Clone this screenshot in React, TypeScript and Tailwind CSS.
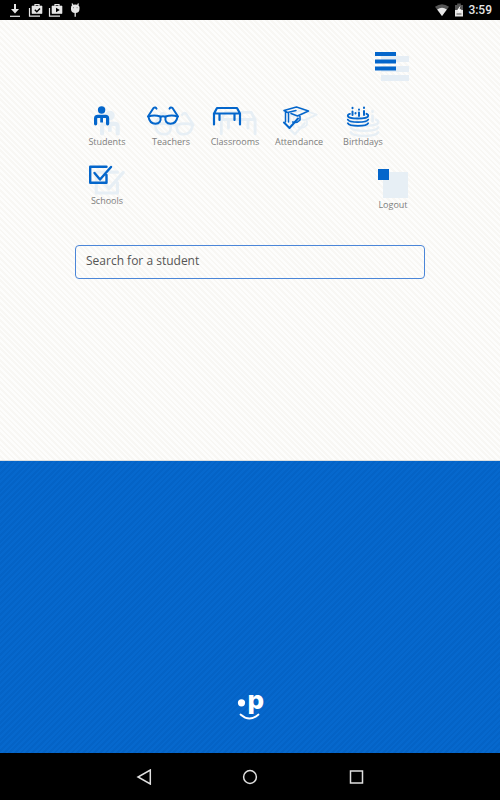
import React, { useState } from 'react';

interface MenuItem {
  label: string;
  shape: React.ReactNode;
  shadow: string;
}

const StudentShape = () => (
  <g fill="none" stroke="currentColor" strokeWidth="3.2" strokeLinejoin="round">
    <circle cx="26.6" cy="10" r="3.7" fill="currentColor" stroke="none" />
    <path d="M20.6 23.8V18.5Q20.6 16.4 22.7 16.4H30.5Q32.6 16.4 32.6 18.5V23.8" strokeLinecap="round" />
    <path d="M26.6 16.8V22.5" strokeWidth="2.8" />
  </g>
);

const GlassesShape = () => (
  <g fill="none" stroke="currentColor" strokeWidth="2" strokeLinecap="round" strokeLinejoin="round">
    <path d="M9.5 16.5Q15 14.5 21.5 16.5Q22.5 23.7 16.5 23.7Q10.5 23.7 9.5 16.5ZM26.5 16.5Q33 14.5 38.5 16.5Q37.5 23.7 31.5 23.7Q25.5 23.7 26.5 16.5Z" />
    <path d="M21.5 17Q24 15.5 26.5 17M9 16.5L14.5 8Q16.5 6.5 17.5 8.7M39 16.5L33.5 8Q31.5 6.5 30.5 8.7" />
  </g>
);

const DeskShape = () => (
  <g fill="none" stroke="currentColor" strokeWidth="2.2" strokeLinecap="round" strokeLinejoin="round">
    <path d="M14 8H34L37 13.5H11ZM11 13.5V24.5M37 13.5V24.5M16.5 14V20M31.5 14V20" />
  </g>
);

const HatShape = () => (
  <g fill="none" stroke="currentColor" strokeWidth="1.5" strokeLinecap="round" strokeLinejoin="round">
    <path d="M17 10.5L29.5 7L41.5 11L30.5 16L24 13.5M17 10.5L20.5 12.5L29 10.5M18.5 12V22M21.5 13.5V22M33 16.5V20Q30 23.5 25.5 22" />
    <path d="M17 22.5L22.5 28L31 18.5" strokeWidth="2" />
  </g>
);

const CakeShape = () => (
  <g fill="none" stroke="currentColor" strokeWidth="1.8" strokeLinecap="round">
    <path d="M19 13.8Q16.5 14.5 16.8 16C17.5 19.3 36.5 19.3 37.2 16Q37.5 14.5 35.5 13.8" />
    <path d="M16.8 19.6C18.5 23 35.5 23 37.2 19.6M16.8 23.2C18.5 26.8 35.5 26.8 37.2 23.2" />
    <path d="M21.5 11.5V15M28 12.5V16M33 11V15M24.5 13V13.5M21.5 7.8V8.3M28 9.5V9.8M33 7.5V8" strokeWidth="2" />
  </g>
);

const CheckShape = () => (
  <g fill="none" stroke="currentColor" strokeWidth="2.4" strokeLinecap="round" strokeLinejoin="round">
    <path d="M31.5 16V23.8H15.2V7.8H31.5M19.5 14L25 20.5L36 8" />
  </g>
);

const items: MenuItem[] = [
  { label: 'Students', shape: <StudentShape />, shadow: 'translate(0.3 2.5) scale(1.3)' },
  { label: 'Teachers', shape: <GlassesShape />, shadow: 'translate(3.6 3.5) scale(1.3)' },
  { label: 'Classrooms', shape: <DeskShape />, shadow: 'translate(4 2) scale(1.3)' },
  { label: 'Attendance', shape: <HatShape />, shadow: 'translate(2 2) scale(1.15)' },
  { label: 'Birthdays', shape: <CakeShape />, shadow: 'translate(-3 1) scale(1.35)' },
];

const schools: MenuItem = {
  label: 'Schools',
  shape: <CheckShape />,
  shadow: 'translate(1.5 3) scale(1.3)',
};

const MenuLink: React.FC<{ item: MenuItem }> = ({ item }) => (
  <a href="#" className="flex w-16 flex-col items-center text-[9px] leading-3 text-[#7d7d7d]">
    <svg viewBox="0 0 64 36" className="h-9 w-16 overflow-visible text-[#0466cb]" aria-hidden="true">
      <g className="text-[#e7eff5]" transform={item.shadow}>
        {item.shape}
      </g>
      {item.shape}
    </svg>
    {item.label}
  </a>
);

const StatusBar = () => (
  <header className="flex h-5 items-center justify-between bg-black px-2 text-[#e6e6e6]">
    <div className="flex items-center gap-1">
      <svg viewBox="0 0 16 16" className="size-4" fill="none" stroke="currentColor">
        <path d="M7 2V8" strokeWidth="2" />
        <path d="M3 7H11L7 11.5Z" fill="currentColor" stroke="none" />
        <path d="M2 14.3H12" strokeWidth="1.2" />
      </svg>
      {['M6.8 7.8L8.8 9.7L12 6.5', 'M8 5.8V10.2L11.8 8Z'].map((mark, index) => (
        <svg key={mark} viewBox="0 0 16 16" className="size-4" fill="none" stroke="currentColor">
          <path d="M4 4H14V11.5H4Z" fill="currentColor" strokeWidth="0.6" />
          <path d="M7 4V2.5H11V4M1.5 6V14.2H12" strokeWidth="1.2" />
          <path d={mark} stroke="#000" strokeWidth={index === 0 ? 1.4 : 0} fill={index === 0 ? 'none' : '#000'} />
        </svg>
      ))}
      <svg viewBox="0 0 16 16" className="size-4" fill="none" stroke="currentColor">
        <path d="M3 5.5Q3 2.5 7.2 2.5Q11.5 2.5 11.5 5.5V7Q11.5 11 7.2 11Q3 11 3 7Z" fill="currentColor" stroke="none" />
        <path d="M4 1.5L5 3.5M10.5 1.5L9.5 3.5M7.2 10V14.8" strokeWidth="1.3" />
        <path d="M5.3 5.7H5.8M8.8 5.7H9.3" stroke="#222" />
      </svg>
    </div>
    <div className="flex items-center gap-1">
      <svg viewBox="0 0 16 16" className="size-4">
        <path d="M1 4.8Q8 -0.2 15 4.8L8 14Z" fill="#555" />
        <path d="M3.2 7.5Q8 4.2 12.8 7.5L8 14Z" fill="currentColor" />
      </svg>
      <svg viewBox="0 0 10 16" className="h-4 w-2.5">
        <path d="M3.2 1.5H6.8V3H9V8H1V3H3.2Z" fill="#555" />
        <path d="M1 8H9V14.5H1Z" fill="currentColor" />
        <path d="M6.5 3.5L3 8.5H5L4.2 12L7.5 7.2H5.5Z" fill="#fff" />
        <path d="M2.5 12H7.5" stroke="#555" />
      </svg>
      <span className="font-['Roboto',sans-serif] text-[12px] leading-5 font-medium">3:59</span>
    </div>
  </header>
);

const SystemNav = () => (
  <nav className="flex h-[47px] items-center justify-center gap-[74px] bg-black text-[#e0e0e0]">
    <button type="button" aria-label="Back" className="flex size-8 items-center justify-center">
      <svg viewBox="0 0 16 16" className="size-4" fill="none" stroke="currentColor" strokeWidth="1.5">
        <path d="M14.3 1V15L2 8Z" />
      </svg>
    </button>
    <button type="button" aria-label="Home" className="flex size-8 items-center justify-center">
      <svg viewBox="0 0 16 16" className="size-4" fill="none" stroke="currentColor" strokeWidth="1.5">
        <circle cx="8" cy="8" r="6.4" />
      </svg>
    </button>
    <button type="button" aria-label="Recent apps" className="flex size-8 items-center justify-center">
      <svg viewBox="0 0 16 16" className="size-4" fill="none" stroke="currentColor" strokeWidth="1.5">
        <path d="M2.5 2H14.5V14H2.5Z" />
      </svg>
    </button>
  </nav>
);

export default function App() {
  const [query, setQuery] = useState('');

  return (
    <div className="flex min-h-screen flex-col bg-black font-['Open_Sans',sans-serif]">
      <StatusBar />

      <main className="flex-1 border-b border-[#dcdfe0] bg-[repeating-linear-gradient(45deg,#fdfdfc_0px,#fdfdfc_2px,#f8f7f4_2px,#f8f7f4_4px)] pt-8">
        <div className="mx-auto w-[70%]">
          <div className="flex justify-end pr-4">
            <button type="button" aria-label="Menu">
              <svg viewBox="0 0 34 32" className="h-8 w-[34px]">
                <path d="M6 4H34V10H6ZM6 14H34V20H6ZM6 23H34V29H6Z" fill="#e6eef5" />
                <path d="M0 0H21V4H0ZM0 7.5H21V11.5H0ZM0 14.5H21V18.5H0Z" fill="#0466cb" />
              </svg>
            </button>
          </div>

          <nav className="mt-4 flex flex-col gap-[11px]">
            <div className="flex">
              {items.map((item) => (
                <MenuLink key={item.label} item={item} />
              ))}
            </div>
            <div className="flex justify-between">
              <MenuLink item={schools} />
              <a href="#" className="flex w-16 flex-col items-center text-[9px] leading-3 text-[#7d7d7d]">
                <svg viewBox="0 0 64 40" className="h-10 w-16" aria-hidden="true">
                  <path d="M22 13H47V39H22Z" fill="#e7eff5" />
                  <path d="M17 10H28V21H17Z" fill="#0466cb" />
                </svg>
                Logout
              </a>
            </div>
          </nav>

          <input
            type="text"
            aria-label="Search for a student"
            placeholder="Search for a student"
            value={query}
            onChange={(e) => setQuery(e.target.value)}
            className="mt-[34px] block h-[34px] w-full rounded border border-[#4b86d8] bg-transparent px-2.5 pb-1 text-[12px] text-[#4d4d4d] outline-none placeholder:text-[#555555]"
          />
        </div>
      </main>

      <section className="flex h-[292px] items-end justify-center bg-[repeating-linear-gradient(-45deg,#0668cd_0px,#0668cd_2px,#0463c6_2px,#0463c6_4px)] pb-8">
        <svg viewBox="0 0 28 28" className="size-7 overflow-visible text-white" role="img" aria-label="p">
          <circle cx="5.5" cy="9.8" r="3.6" fill="currentColor" />
          <text x="11.5" y="16" fontSize="26" fill="currentColor" className="font-['Inter',sans-serif] font-extrabold">
            p
          </text>
          <path d="M4.5 21.5Q13.5 29.5 22.5 21.5" fill="none" stroke="currentColor" strokeWidth="1.8" strokeLinecap="round" />
        </svg>
      </section>

      <SystemNav />
    </div>
  );
}
